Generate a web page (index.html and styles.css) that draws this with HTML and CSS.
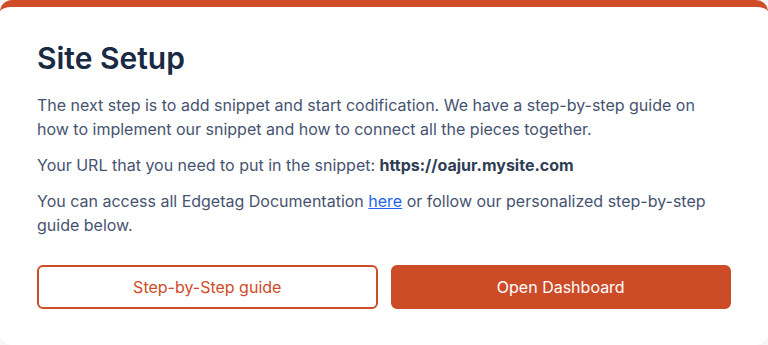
FILE: index.html
```html
<!DOCTYPE html>
<html lang="en">
<head>
    <meta charset="UTF-8">
    <meta name="viewport" content="width=device-width, initial-scale=1.0">
    <title>Site Setup</title>
    <link rel="stylesheet" href="styles.css">
</head>
<body>
    <div class="setup-card">
        <h1 class="setup-title">Site Setup</h1>
        <p class="setup-text">The next step is to add snippet and start codification. We have a step-by-step guide on how to implement our snippet and how to connect all the pieces together.</p>
        <p class="setup-text">Your URL that you need to put in the snippet: <strong>https://oajur.mysite.com</strong></p>
        <p class="setup-text">You can access all Edgetag Documentation <a href="#">here</a> or follow our personalized step-by-step guide below.</p>
        <div class="setup-actions">
            <button class="btn btn-outline">Step-by-Step guide</button>
            <button class="btn btn-filled">Open Dashboard</button>
        </div>
    </div>
</body>
</html>
```

FILE: styles.css
```css
html, body {
    margin: 0;
    background-color: #f7f7f8;
    font-family: Inter, 'Noto Sans', sans-serif;
}
.setup-card {
    background-color: #ffffff;
    border-top: 7px solid #cf4c28;
    border-radius: 12px;
    padding: 31px 37px 37px 37px;
    height: 345px;
    box-sizing: border-box;
}
.setup-title {
    margin: 0 0 15px 0;
    font-size: 30px;
    line-height: 40px;
    font-weight: 600;
    color: #1a2a44;
}
.setup-text {
    margin: 0 0 12px 0;
    font-size: 16px;
    line-height: 24px;
    color: #465370;
}
.setup-text strong {
    font-weight: 700;
    color: #2f3d55;
}
.setup-text a {
    color: #2563eb;
    text-decoration: underline;
}
.setup-actions {
    display: flex;
    gap: 13px;
    margin-top: 28px;
}
.btn {
    flex: 1;
    height: 44px;
    border-radius: 6px;
    font-family: Inter, 'Noto Sans', sans-serif;
    font-size: 16px;
    font-weight: 400;
    cursor: pointer;
}
.btn-outline {
    background-color: #ffffff;
    border: 2px solid #cf4c28;
    color: #cf4c28;
}
.btn-filled {
    background-color: #cd4c28;
    border: 2px solid #cd4c28;
    color: #ffffff;
}
```
